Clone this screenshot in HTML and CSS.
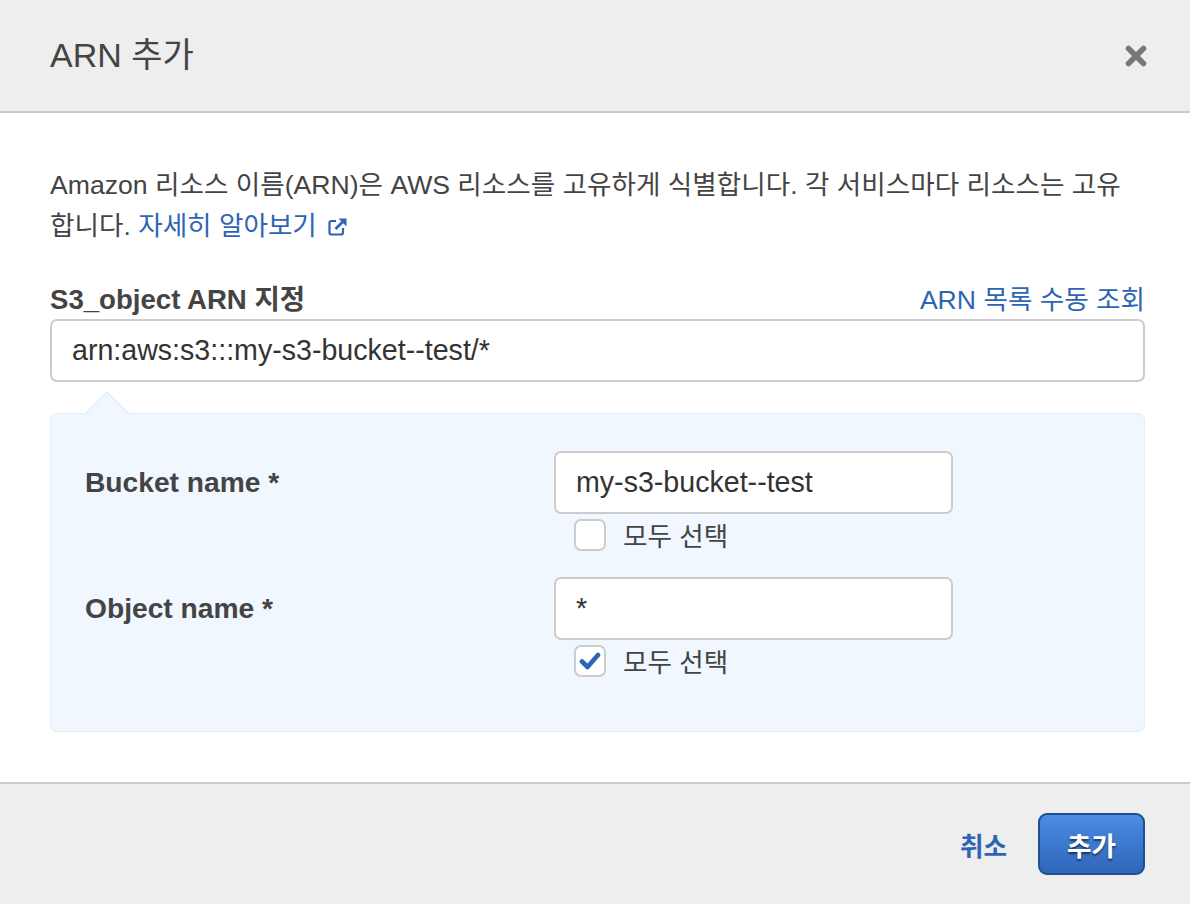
FILE: index.html
```html
<!DOCTYPE html>
<html lang="ko">
<head>
<meta charset="utf-8">
<title>ARN 추가</title>
<link rel="stylesheet" href="styles.css">
</head>
<body>
<div class="modal">
  <div class="modal-header">
    <h1 class="modal-title">ARN 추가</h1>
    <button class="close-btn" aria-label="닫기">
      <svg width="22" height="22" viewBox="0 0 22 22"><path d="M3.5 3.5 L18.5 18.5 M18.5 3.5 L3.5 18.5" stroke="#777" stroke-width="5.5" stroke-linecap="round"/></svg>
    </button>
  </div>
  <div class="modal-body">
    <p class="desc">Amazon 리소스 이름(ARN)은 AWS 리소스를 고유하게 식별합니다. 각 서비스마다 리소스는 고유<br>합니다. <a class="link" href="#">자세히 알아보기 <svg class="ext-icon" width="22" height="20" viewBox="0 0 22 20"><path d="M9 4 H4.5 Q2.5 4 2.5 6 V15.5 Q2.5 17.5 4.5 17.5 H14 Q16 17.5 16 15.5 V11" fill="none" stroke="#2d65b5" stroke-width="2.2"/><path d="M8.5 12 L17 3.5" stroke="#2d65b5" stroke-width="2.6"/><path d="M11.5 1.5 H19.5 V9.5 Z" fill="#2d65b5"/></svg></a></p>
    <div class="field-head">
      <span class="field-label">S3_object ARN 지정</span>
      <a class="link" href="#">ARN 목록 수동 조회</a>
    </div>
    <div class="text-input wide">arn:aws:s3:::my-s3-bucket--test/*</div>
    <div class="panel">
      <div class="panel-row">
        <div class="row-label">Bucket name *</div>
        <div class="row-control">
          <div class="text-input">my-s3-bucket--test</div>
          <label class="check"><span class="box"></span><span>모두 선택</span></label>
        </div>
      </div>
      <div class="panel-row">
        <div class="row-label">Object name *</div>
        <div class="row-control">
          <div class="text-input">*</div>
          <label class="check"><span class="box checked"><svg width="22" height="20" viewBox="0 0 22 20"><path d="M3 10.5 L8.5 16 L19 4" fill="none" stroke="#2d63b3" stroke-width="4.6" stroke-linecap="round" stroke-linejoin="round"/></svg></span><span>모두 선택</span></label>
        </div>
      </div>
    </div>
  </div>
  <div class="modal-footer">
    <a class="cancel" href="#">취소</a>
    <button class="primary">추가</button>
  </div>
</div>
</body>
</html>
```
FILE: styles.css
```css
* { box-sizing: border-box; }
html, body { margin: 0; padding: 0; background: #fff; }
body {
  font-family: "Liberation Sans", "Noto Sans CJK KR", sans-serif;
  color: #444;
  width: 1190px;
  height: 904px;
  overflow: hidden;
}
.modal { display: flex; flex-direction: column; height: 904px; }
.modal-header {
  height: 113px;
  background: #eeeeee;
  border-bottom: 2px solid #cacaca;
  display: flex;
  align-items: center;
  justify-content: space-between;
  padding: 0 43px 0 50px;
}
.modal-title {
  margin: 0;
  font-weight: normal;
  font-size: 34px;
  color: #444;
  padding-bottom: 6px;
}
.close-btn {
  border: 0;
  background: none;
  padding: 0;
  width: 22px;
  height: 22px;
  cursor: pointer;
  display: flex;
}
.modal-body {
  flex: 1;
  padding: 52px 45px 0 50px;
}
.desc {
  margin: 0;
  font-size: 26.6px;
  line-height: 41px;
  color: #444;
  white-space: nowrap;
}
.link { color: #2d65b5; text-decoration: none; }
.ext-icon { vertical-align: -2px; margin-left: 3px; }
.field-head {
  margin-top: 35px;
  display: flex;
  justify-content: space-between;
  align-items: center;
  height: 30px;
  font-size: 26.6px;
}
.field-label { font-weight: bold; color: #444; font-size: 27.6px; }
.text-input {
  height: 63px;
  border: 2px solid #cccccc;
  border-radius: 7px;
  background: #fff;
  font-size: 28.6px;
  color: #333;
  display: flex;
  align-items: center;
  padding: 0 20px;
}
.text-input.wide { margin-top: 7px; }
.panel {
  position: relative;
  margin-top: 31px;
  background: #f0f7fe;
  border: 1px solid #e1edfa;
  border-radius: 7px;
  padding: 37px 0 55px 34px;
}
.panel::before {
  content: "";
  position: absolute;
  left: 33px;
  top: -23px;
  width: 0; height: 0;
  border-left: 23px solid transparent;
  border-right: 23px solid transparent;
  border-bottom: 23px solid #e1edfa;
}
.panel::after {
  content: "";
  position: absolute;
  left: 35px;
  top: -21px;
  width: 0; height: 0;
  border-left: 21px solid transparent;
  border-right: 21px solid transparent;
  border-bottom: 21px solid #f0f7fe;
}
.panel-row {
  display: grid;
  grid-template-columns: 469px 399px;
  align-items: start;
}
.panel-row + .panel-row { margin-top: 27px; }
.row-label {
  font-size: 28.2px;
  font-weight: bold;
  color: #444;
  height: 63px;
  display: flex;
  align-items: center;
}
.row-control { display: flex; flex-direction: column; }
.check {
  display: flex;
  align-items: center;
  gap: 17px;
  margin-top: 5px;
  margin-left: 20px;
  font-size: 26.6px;
  color: #444;
  height: 31px;
}
.box {
  width: 32px;
  height: 32px;
  border: 2px solid #cccccc;
  border-radius: 7px;
  background: #fff;
  display: flex;
  align-items: center;
  justify-content: center;
  flex: none;
}
.modal-footer {
  height: 122px;
  background: #eeeeee;
  border-top: 2px solid #cacaca;
  display: flex;
  align-items: center;
  justify-content: flex-end;
  gap: 31px;
  padding: 0 45px 0 0;
}
.cancel {
  font-size: 25.6px;
  font-weight: bold;
  color: #2d65b5;
  text-decoration: none;
}
.primary {
  width: 107px;
  height: 62px;
  border: 2px solid #1f4f90;
  border-radius: 9px;
  background: linear-gradient(#4b8ce2, #2f66ba);
  color: #fff;
  font-family: inherit;
  font-size: 26.6px;
  font-weight: bold;
  text-shadow: 0 2px 2px rgba(0,0,0,0.55);
  cursor: pointer;
  padding: 0;
}
```
